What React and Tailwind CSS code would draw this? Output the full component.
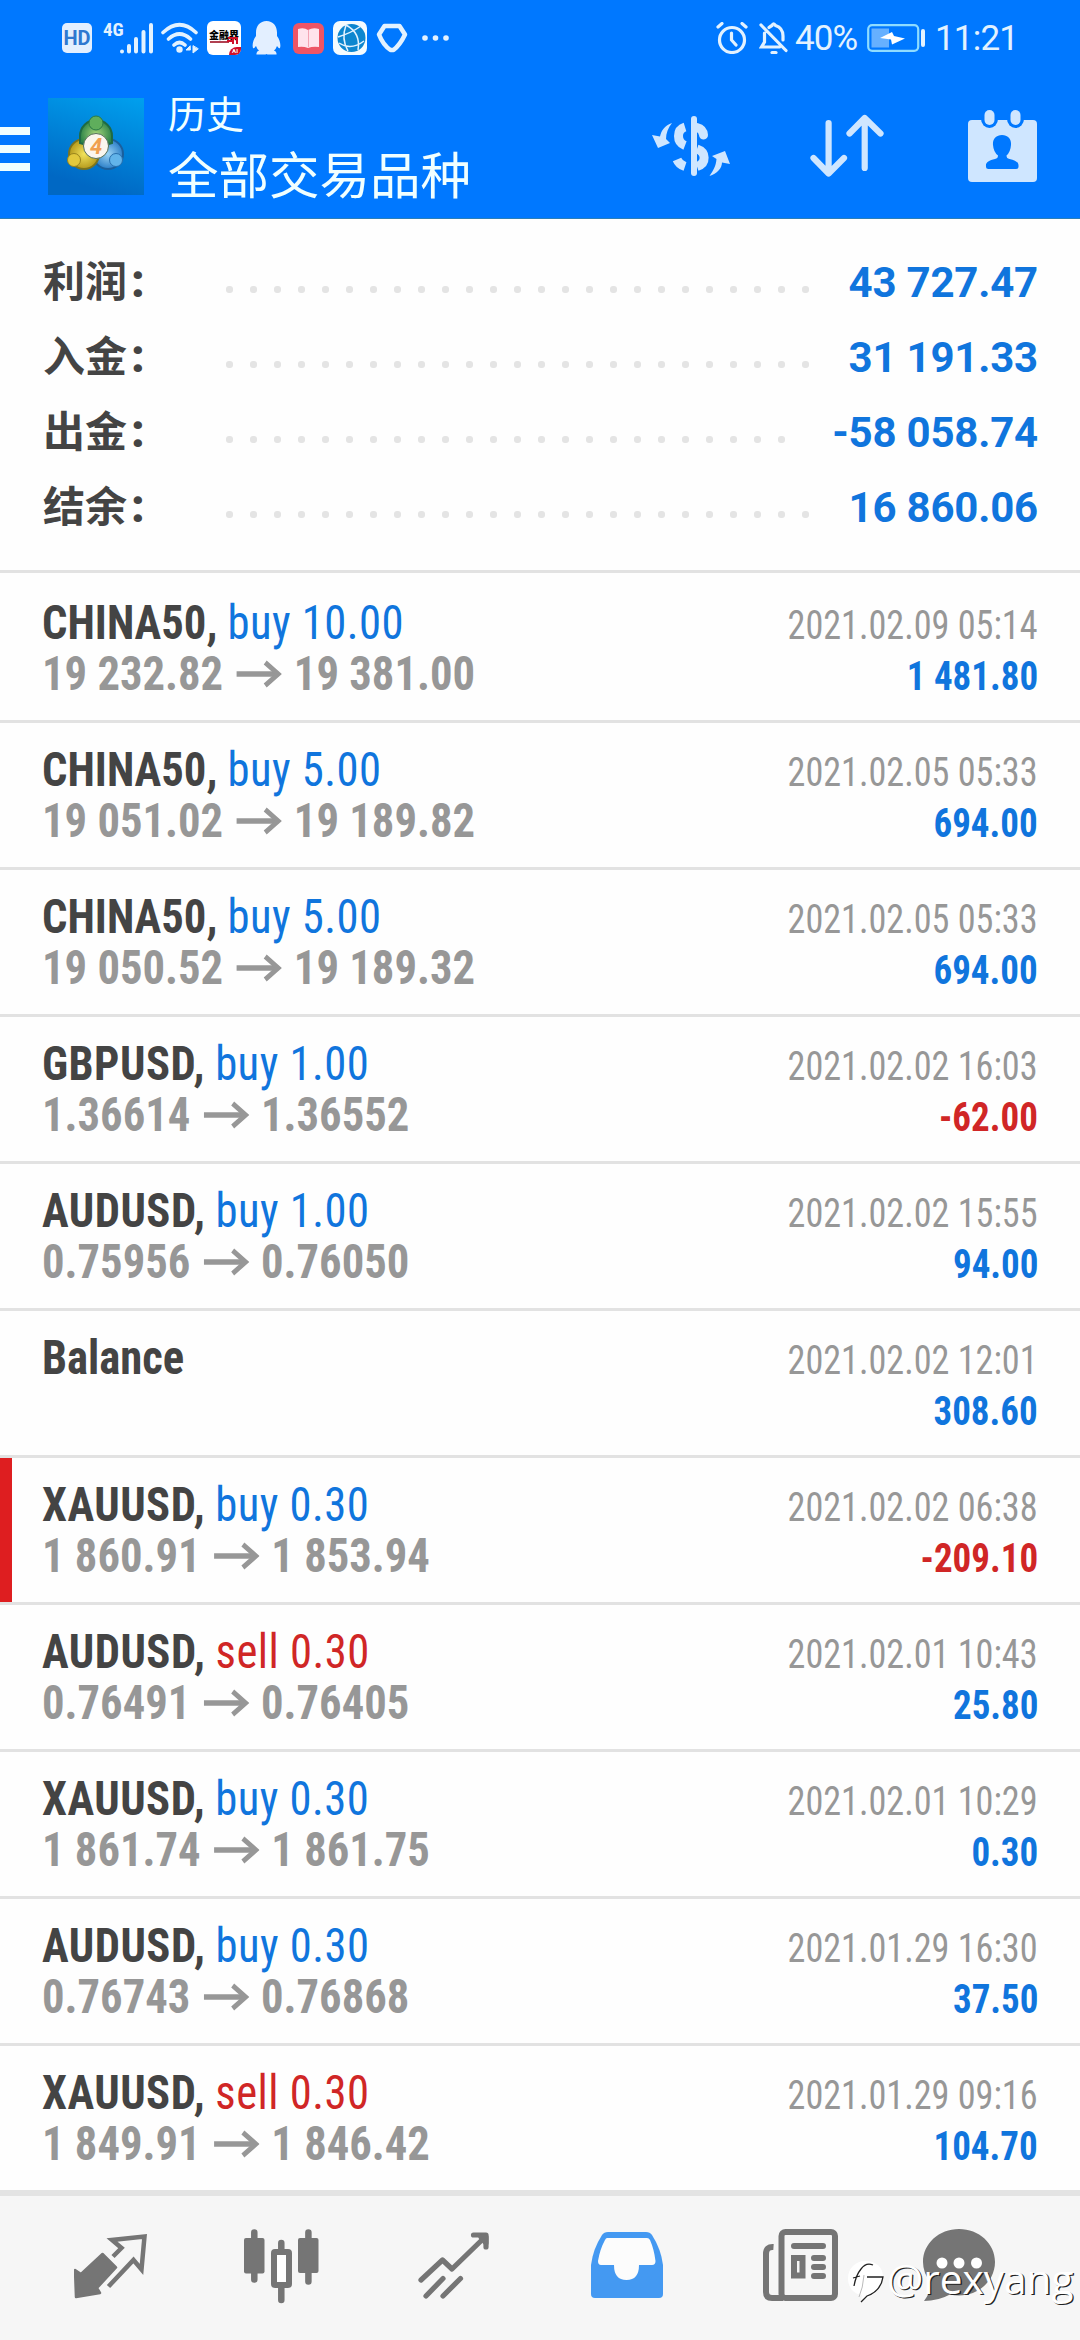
import React from "react";
import clsx from "clsx";

const summary = [
  { label: "利润", value: "43 727.47", dots: 25 },
  { label: "入金", value: "31 191.33", dots: 25 },
  { label: "出金", value: "-58 058.74", dots: 24 },
  { label: "结余", value: "16 860.06", dots: 25 },
];

const deals = [
  { symbol: "CHINA50", side: "buy", volume: "10.00", open: "19 232.82", close: "19 381.00", time: "2021.02.09 05:14", profit: "1 481.80" },
  { symbol: "CHINA50", side: "buy", volume: "5.00", open: "19 051.02", close: "19 189.82", time: "2021.02.05 05:33", profit: "694.00" },
  { symbol: "CHINA50", side: "buy", volume: "5.00", open: "19 050.52", close: "19 189.32", time: "2021.02.05 05:33", profit: "694.00" },
  { symbol: "GBPUSD", side: "buy", volume: "1.00", open: "1.36614", close: "1.36552", time: "2021.02.02 16:03", profit: "-62.00" },
  { symbol: "AUDUSD", side: "buy", volume: "1.00", open: "0.75956", close: "0.76050", time: "2021.02.02 15:55", profit: "94.00" },
  { symbol: "Balance", time: "2021.02.02 12:01", profit: "308.60" },
  { symbol: "XAUUSD", side: "buy", volume: "0.30", open: "1 860.91", close: "1 853.94", time: "2021.02.02 06:38", profit: "-209.10", stopped: true },
  { symbol: "AUDUSD", side: "sell", volume: "0.30", open: "0.76491", close: "0.76405", time: "2021.02.01 10:43", profit: "25.80" },
  { symbol: "XAUUSD", side: "buy", volume: "0.30", open: "1 861.74", close: "1 861.75", time: "2021.02.01 10:29", profit: "0.30" },
  { symbol: "AUDUSD", side: "buy", volume: "0.30", open: "0.76743", close: "0.76868", time: "2021.01.29 16:30", profit: "37.50" },
  { symbol: "XAUUSD", side: "sell", volume: "0.30", open: "1 849.91", close: "1 846.42", time: "2021.01.29 09:16", profit: "104.70" },
];

const StatusBar = () => (
  <div className="flex h-[76px] items-center pr-[64px] pl-[62px] text-[#e3f2ff]">
    <div className="flex h-[30px] w-[30px] items-center justify-center rounded-[5px] bg-[#e3efff] font-['Roboto',sans-serif] text-[20px] leading-none font-bold text-[#2f78d0]">
      HD
    </div>
    <span className="-mt-[17px] ml-[11px] w-[17px] font-['Roboto_Condensed',sans-serif] text-[19px] leading-none font-bold">
      4G
    </span>
    <svg className="h-[32px] w-[33px]" viewBox="0 0 33 32" stroke="currentColor" strokeWidth="4" strokeLinecap="round">
      <path d="M2 29.5v.1M9 24v5.5M16 17v12.5M23.500 10v19.500M31 3v26.500" />
    </svg>
    <svg className="ml-[8px] h-[32px] w-[39px]" viewBox="0 0 39 32" fill="none" stroke="currentColor" strokeWidth="3.600" strokeLinecap="round">
      <path d="M2 10.500Q18.500-5 35 10.500M7.500 17Q18.500 7 29.500 17M13 23Q18.500 18 24 23" />
      <circle cx="18.500" cy="27.500" r="3.200" fill="currentColor" stroke="none" />
      <path d="M29 24l-4 4h4zM32 24v7l5-4z" fill="currentColor" strokeWidth="1" />
    </svg>
    <div className="relative ml-[7px] h-[34px] w-[34px] overflow-hidden rounded-[6px] bg-white">
      <p className="mt-[9px] text-center font-['Noto_Sans_CJK_SC',sans-serif] text-[10px] leading-[10px] font-black text-black">
        金融界
      </p>
      <div className="mx-[3px] mt-px h-[2px] w-[19px] bg-[#b04050]" />
      <svg className="absolute top-[10px] left-[20px] h-[14px] w-[12px]" viewBox="0 0 12 14" fill="none" stroke="#d0102a" strokeWidth="2">
        <path d="M0 10h5M1 7h9v6M6 7v6" />
      </svg>
      <div className="absolute right-0 bottom-0 h-[8px] w-[12px] rounded-tl-full bg-[#d0102a] text-center font-['Roboto',sans-serif] text-[6px] leading-[8px] font-bold text-white">
        AI
      </div>
    </div>
    <svg className="ml-[11px] h-[34px] w-[29px]" viewBox="0 0 29 34" fill="#e3efff">
      <path d="M14.500 0C8 0 4 5 4 11.500L4 15C1 19 0 24 1 27c1 1 2-1 3-2q1 3 3 4.500q-3 1-2.500 4h9l1-.5l1 .5h9q.5-3-2.500-4q2-1.500 3-4.500c1 1 2 3 3 2c1-3 0-8-3-12V11.500C25 5 21 0 14.500 0z" />
    </svg>
    <svg className="ml-[12px] h-[31px] w-[31px]" viewBox="0 0 31 31">
      <rect width="31" height="31" rx="6" fill="#ee5566" />
      <path d="M5 6q6-2 10 1q5-3 11-1v18q-6-1-11 1q-5-2-10-1z" fill="#ffe3ec" />
      <path d="M15.500 7v17" stroke="#f3a3b3" strokeWidth="1" />
    </svg>
    <svg className="ml-[9px] h-[34px] w-[34px]" viewBox="0 0 34 34" fill="none" stroke="#e3f2ff" strokeWidth="1.500">
      <rect width="34" height="34" rx="7" fill="#f4fbff" stroke="none" />
      <circle cx="18.500" cy="17" r="14" fill="#0d86cf" stroke="none" />
      <path d="M5 16Q18 12 28 5M13 4Q28 12 25 29M6 22Q18 30 31 20M13 4Q8 18 15 30" />
    </svg>
    <svg className="ml-[9px] h-[30px] w-[32px]" viewBox="0 0 32 30" fill="none" stroke="currentColor" strokeWidth="4.500" strokeLinejoin="round">
      <path d="M8.500 3h15L29 11.500Q24 22 17.500 27h-3Q7 22 3 11.500z" />
    </svg>
    <svg className="ml-[14px] h-[6px] w-[27px]" viewBox="0 0 27 6" fill="currentColor">
      <circle cx="3" cy="3" r="2.800" />
      <circle cx="13.500" cy="3" r="2.800" />
      <circle cx="24" cy="3" r="2.800" />
    </svg>

    <svg className="ml-auto h-[32px] w-[32px]" viewBox="0 0 32 32" fill="none" stroke="currentColor" strokeWidth="3.200" strokeLinecap="round">
      <circle cx="16" cy="18" r="12.500" />
      <path d="M15.500 11v7l4.500 5M2 5l4-3.500M30 5l-4-3.500" />
    </svg>
    <svg className="ml-[11px] h-[32px] w-[29px]" viewBox="0 0 29 32" fill="none" stroke="currentColor" strokeWidth="3.200" strokeLinecap="round">
      <path d="M2 3l25 25.500M10 5.500Q12 4 13 3.500Q14.500 0 16.500 3.500Q24 6 24 14v4M5.500 11v9l-3 5h18" />
      <path d="M13 30.500h4" />
    </svg>
    <span className="ml-[7px] w-[62px] font-['Roboto',sans-serif] text-[35px] leading-none tracking-[-0.9px]">40%</span>
    <svg className="ml-[10px] h-[28px] w-[60px]" viewBox="0 0 60 28" fill="none">
      <rect x="1.200" y="1.200" width="50" height="25.600" rx="4" stroke="#8fdcff" strokeWidth="2.200" />
      <rect x="4.500" y="4.500" width="17.500" height="19" fill="#66b0ff" />
      <path d="M13 14l12-6l2 4l11 2.500l-13 6l-1-5z" fill="#fff" />
      <rect x="54" y="5" width="4" height="18" rx="2" fill="currentColor" />
    </svg>
    <span className="ml-[8px] w-[81px] font-['Roboto',sans-serif] text-[35px] leading-none tracking-[-0.8px]">11:21</span>
  </div>
);

const Logo = () => (
  <svg className="h-[97px] w-[96px]" viewBox="0 0 96 97">
    <defs>
      <linearGradient id="sky" x1="1" y1="0" x2="0.700" y2="1">
        <stop offset="0" stopColor="#00a0ee" />
        <stop offset="1" stopColor="#0068c4" />
      </linearGradient>
      <radialGradient id="green"><stop offset="0" stopColor="#a6d67c" /><stop offset="1" stopColor="#2f8448" /></radialGradient>
      <radialGradient id="yellow"><stop offset="0" stopColor="#f2e35c" /><stop offset="1" stopColor="#b59a1c" /></radialGradient>
      <radialGradient id="blue"><stop offset="0" stopColor="#9cd4f5" /><stop offset="1" stopColor="#2c7fc8" /></radialGradient>
    </defs>
    <rect width="96" height="97" fill="url(#sky)" />
    <circle cx="60" cy="56" r="15" fill="url(#blue)" stroke="#1b5f9c" strokeWidth="2" />
    <circle cx="36" cy="56" r="15" fill="url(#yellow)" stroke="#7a7420" strokeWidth="2" />
    <path d="M32 45V38a16 16 0 0 1 32 0V45L48 50z" fill="url(#green)" stroke="#1f6a44" strokeWidth="2" />
    <circle cx="48" cy="25" r="7" fill="#5fae5c" stroke="#2a7a44" strokeWidth="1" />
    <circle cx="26" cy="62" r="6.500" fill="#e2c93c" stroke="#98841c" strokeWidth="1" />
    <circle cx="68" cy="62" r="6.500" fill="#62b4ea" stroke="#276fae" strokeWidth="1" />
    <circle cx="48" cy="48" r="12.500" fill="#fbf6ee" stroke="#56705a" strokeWidth="1" />
    <text x="48" y="56" textAnchor="middle" fill="#f0a050" className="font-['Roboto',sans-serif] text-[22px] font-bold italic">
      4
    </text>
  </svg>
);

const Header = () => (
  <header className="flex h-[143px] pr-[42px] text-[#cfe6ff]">
    <div className="mt-[51px] flex w-[30px] flex-col gap-[10px]">
      <div className="h-[8px] bg-[#f0ffff]" />
      <div className="h-[8px] bg-[#f0ffff]" />
      <div className="h-[8px] bg-[#f0ffff]" />
    </div>
    <div className="mt-[22px] ml-[18px]">
      <Logo />
    </div>
    <div className="ml-[24px] flex flex-col font-['Noto_Sans_CJK_SC',sans-serif] text-[#f0ffff]">
      <span className="mt-[13px] text-[38px] leading-[46px]">历史</span>
      <span className="mt-[7px] text-[50.500px] leading-[60px]">全部交易品种</span>
    </div>
    <div className="ml-auto flex h-[140px] items-center">
      <svg className="h-[60px] w-[79px]" viewBox="0 0 79 60" fill="none" stroke="currentColor" strokeWidth="9">
        <path d="M43 3v54" strokeWidth="6" strokeLinecap="round" />
        <path d="M34 11Q27.500 13 27.500 20T34 29.500" />
        <path d="M46 11.500Q52 13 52.500 19" strokeLinecap="round" />
        <path d="M46 33C55 36 56 47 46 50.500" />
        <path d="M26 43.500Q28 48.500 34 50.500" />
        <path d="M21 7C14 9 10 15 9 20.500L1 19L7 32L19 27L15 23C15 17 17 12 21 7z" fill="currentColor" stroke="none" />
        <path d="M58.500 60C66 58 71 52 71 46.500L79 48L74 35L61 40L65.500 43C65 50 62 55 58.500 60z" fill="currentColor" stroke="none" />
      </svg>
      <svg className="ml-[80px] h-[64px] w-[74px]" viewBox="0 0 74 64" fill="none" stroke="currentColor" strokeWidth="6.200" strokeLinecap="round" strokeLinejoin="round">
        <path d="M18.600 9v50M3.500 44l15.100 15.500L34 44" />
        <path d="M54.700 54V4M39.500 19.500L54.700 4L70.500 19.500" />
      </svg>
      <svg className="ml-[84px] h-[72px] w-[70px]" viewBox="0 0 70 72">
        <rect y="10" width="69" height="62" rx="4" fill="currentColor" />
        <g fill="#0078ff">
          <ellipse cx="21.500" cy="9" rx="8.500" ry="9" />
          <ellipse cx="47.500" cy="9" rx="8.500" ry="9" />
          <path d="M34 25c6 0 9.500 4 9 10q-.5 7-4.500 10.500q0 3 3 3.500c6 1.500 9.500 3 9 7.500q0 2.500-2.500 2.500h-27.500q-2.500 0-2.500-2.500c-.5-4.500 3-6 9-7.500q3-.5 3-3.500q-4.500-3.500-5-10.500c-.5-6 3-10 9-10z" />
        </g>
        <rect x="16.500" y="0" width="10" height="15" rx="5" fill="currentColor" />
        <rect x="42.500" y="0" width="10" height="15" rx="5" fill="currentColor" />
      </svg>
    </div>
  </header>
);

const Summary = () => (
  <section className="flex h-[354px] flex-col border-b-[3px] border-[#e2e2e2] pt-[26px]">
    {summary.map((row) => (
      <div key={row.label} className="flex h-[75px] items-center pr-[42px] pl-[43px]">
        <span className="-mt-[5px] flex w-[183px] font-['Noto_Sans_CJK_SC',sans-serif] text-[42px] leading-[75px] font-bold text-[#444]">
          {row.label}
          <span className="mt-[3px] ml-[4px] font-['Roboto',sans-serif] text-[46px] font-black">:</span>
        </span>
        <div className="mt-[13px] flex gap-[17px]">
          {Array.from({ length: row.dots }, (_, i) => (
            <span key={i} className="h-[7px] w-[7px] rounded-[3px] bg-[#e4e4e4]" />
          ))}
        </div>
        <span className="ml-auto font-['Roboto',sans-serif] text-[42px] leading-[75px] font-bold tracking-[-0.2px] text-[#1075dd]">
          {row.value}
        </span>
      </div>
    ))}
  </section>
);

const Deal = ({ deal, first }) => (
  <li
    className={clsx(
      "flex h-[147px] border-t-[3px]",
      first ? "border-transparent" : "border-[#e2e2e2]"
    )}
  >
    <div className={clsx("h-[144px] w-[12px]", deal.stopped && "bg-[#de1e20]")} />
    <div className="flex flex-1 justify-between pt-[21px] pr-[42px] pl-[30px] font-['Roboto_Condensed',sans-serif] whitespace-nowrap">
      <div className="origin-left scale-x-[0.93] text-[48px] leading-[51px]">
        <p>
          <span className={clsx("font-bold text-[#444]", deal.symbol.endsWith("USD") && "tracking-[0.5px]")}>
            {deal.symbol}
            {deal.side && ","}
          </span>{" "}
          {deal.side && (
            <span className={clsx("tracking-[0.5px]", deal.side === "buy" ? "text-[#1075dd]" : "text-[#d02626]")}>
              {deal.side} {deal.volume}
            </span>
          )}
        </p>
        {deal.open && (
          <p className="flex items-center font-bold text-[#979797]">
            {deal.open}
            <svg className="mr-[13px] ml-[14px] h-[30px] w-[49px]" viewBox="0 0 49 30" fill="none" stroke="currentColor" strokeWidth="5.500">
              <path d="M0 15h45" />
              <path d="M31 3.500L45 15L31 26.500" strokeWidth="5" />
            </svg>
            {deal.close}
          </p>
        )}
      </div>
      <div className="flex flex-col items-end text-[40px] leading-[51px]">
        <p className="mt-[3px] origin-right scale-x-[0.904] text-[#979797]">{deal.time}</p>
        <p className={clsx("origin-right scale-x-[0.925] font-bold", deal.profit.startsWith("-") ? "text-[#d02626]" : "text-[#1075dd]")}>
          {deal.profit}
        </p>
      </div>
    </div>
  </li>
);

const NavBar = () => (
  <nav className="relative flex h-[150px] border-t-[6px] border-[#e3e3e3] bg-[#f6f6f6] pt-[33px] pl-[74px] text-[#757575]">
    <svg className="h-[75px] w-[75px]" viewBox="0 0 75 75" fill="none" stroke="currentColor" strokeWidth="4.500">
      <path d="M1 41L7 45L28.500 25L42 38.500L23 59L26 64L2 68z" fill="currentColor" strokeWidth="2.500" strokeLinejoin="round" />
      <path d="M39 27.500L47.500 19L38 11L70.500 7.500L67.500 40.500L59.500 31L34.500 57.500" />
    </svg>
    <svg className="ml-[95px] h-[75px] w-[75px]" viewBox="0 0 75 75" fill="currentColor" stroke="currentColor" strokeWidth="6.500" strokeLinecap="round">
      <path d="M10.300 3.500v47M37.300 14v8M37.300 57v14M64.400 3.500v49" />
      <rect x="0" y="9" width="20.500" height="35.500" rx="2" stroke="none" />
      <rect x="54" y="9" width="20.500" height="35" rx="2" stroke="none" />
      <rect x="30" y="23" width="15" height="33" rx="1" fill="#fff" strokeWidth="6" />
    </svg>
    <svg className="ml-[99px] h-[75px] w-[75px]" viewBox="0 0 75 75" fill="none" stroke="currentColor" strokeWidth="5.200" strokeLinecap="round" strokeLinejoin="round">
      <path d="M3 51L24.500 31L34 40L67 8M55.500 6H68V18" />
      <path d="M63 8h5v6z" fill="currentColor" />
      <path d="M8 67L25 49.500M25 67L42.500 49.500" />
    </svg>
    <svg className="ml-[98px] h-[75px] w-[75px]" viewBox="0 0 75 75">
      <path d="M11 6Q13 3 17 3H55Q59 3 61 6Q70 20 72 36V65Q72 69 68 69H4Q0 69 0 65V36Q2 20 11 6z" fill="#4499f2" />
      <path d="M16 9H56Q58 9 59 11Q63 20 64.500 32Q64.500 36 61 36H48Q48 51 35.500 51T23 36H10Q7 36 7 32Q9 20 14 11Q15 9 16 9z" fill="#fcfcfc" />
    </svg>
    <svg className="ml-[97px] h-[75px] w-[75px]" viewBox="0 0 75 75" fill="none" stroke="currentColor" strokeWidth="6" strokeLinecap="round">
      <rect x="18.500" y="3" width="53.500" height="66" rx="4" />
      <path d="M10.500 18Q3 17.500 3 25V63Q3 69 9 69H20" strokeLinecap="butt" />
      <path d="M31 17H60M51 29H60M51 38H60M51 47H60" strokeWidth="6" />
      <rect x="31" y="29" width="8.500" height="17.500" />
    </svg>
    <svg className="ml-[85px] h-[75px] w-[75px]" viewBox="0 0 75 75" fill="currentColor">
      <path d="M36 0C56 0 72 14.500 72 33S56 66.500 36 66.500Q31 66.500 27 65.500Q15 72 1 72Q8 63 7.500 53Q0 44 0 33C0 14.500 16 0 36 0z" />
      <g fill="#fff">
        <circle cx="19" cy="34" r="5.500" />
        <circle cx="36" cy="34" r="5.500" />
        <circle cx="53.500" cy="34" r="5.500" />
      </g>
    </svg>
    <div className="absolute top-[59px] left-[848px] flex">
      <svg className="mt-[6px] h-[44px] w-[38px]" viewBox="0 0 38 44" fill="none">
        <path d="M17 0C28 0 35 6 35 16Q35 32 13 40L14 34C5 33 0 26 0 17S7 0 17 0z" fill="#fff" />
        <path d="M6 25Q8 14 13 8Q18 1 25 4M5 17l7-2M19 16h16Q33 30 19 35L13 41" stroke="#222" strokeWidth="1.300" />
        <path d="M16 14Q15 27 11 36" stroke="#bbb" strokeWidth="1" />
      </svg>
      <span className="ml-[1px] font-['Open_Sans',sans-serif] text-[40.500px] leading-[48px] text-white [text-shadow:1.300px_1.300px_0px_#222]">
        @rexyang
      </span>
    </div>
  </nav>
);

const App = () => {
  return (
    <div className="flex h-[2340px] w-[1080px] flex-col overflow-hidden bg-[#fefefe]">
      <div className="h-[219px] border-b border-[#2b7fb8] bg-[#0078ff]">
        <StatusBar />
        <Header />
      </div>
      <Summary />
      <ul className="flex h-[1617px] flex-col">
        {deals.map((deal, i) => (
          <Deal key={i} deal={deal} first={i === 0} />
        ))}
      </ul>
      <NavBar />
    </div>
  );
};

export default App;
